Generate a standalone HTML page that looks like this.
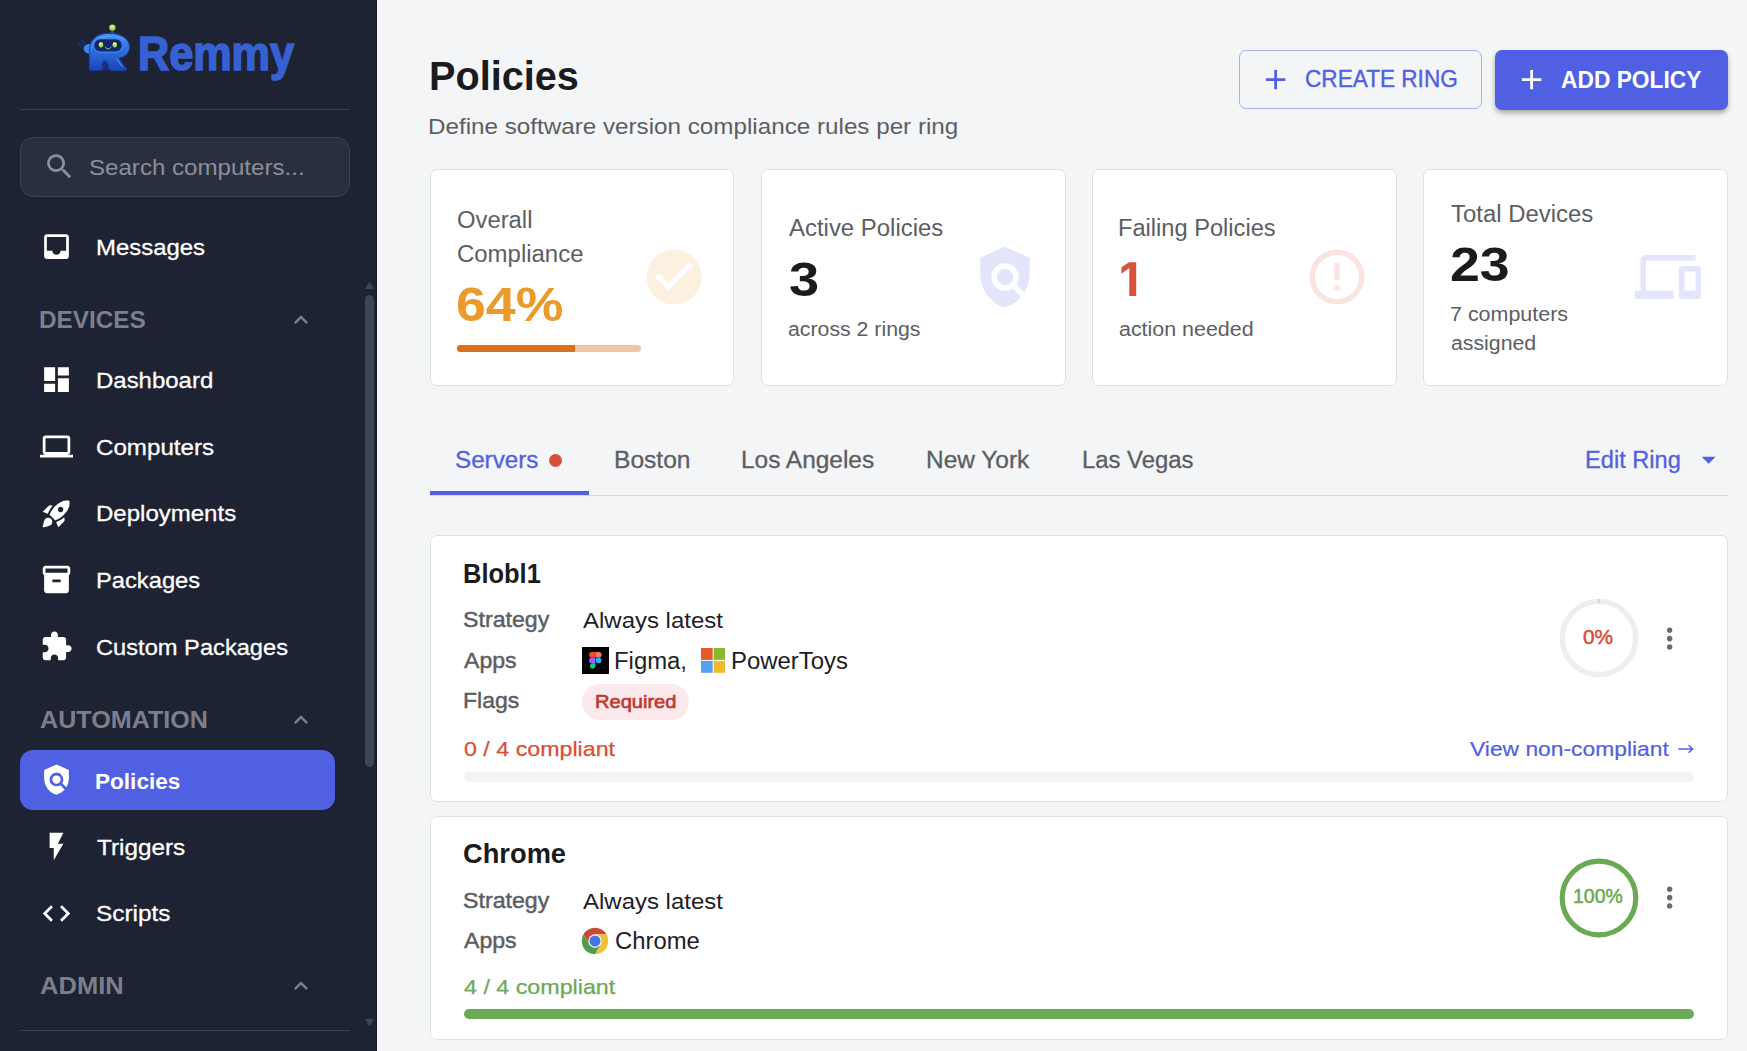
<!DOCTYPE html>
<html lang="en">
<head>
<meta charset="utf-8">
<title>Remmy - Policies</title>
<style>
*{box-sizing:border-box;margin:0;padding:0}
html,body{width:1747px;height:1051px;overflow:hidden;background:#f4f5f7;font-family:"Liberation Sans",sans-serif;}
body{position:relative}
.abs{position:absolute;white-space:nowrap;line-height:1}
svg{display:block}
/* ---------- sidebar ---------- */
#sidebar{position:absolute;left:0;top:0;width:377px;height:1051px;background:#1d2333;border-right:1px solid #121727}
.hr{position:absolute;left:20px;width:330px;height:1px;background:#3a3f4c}
#search{position:absolute;left:20px;top:137px;width:330px;height:60px;border-radius:13px;background:#2a2f3f;border:1px solid #3b4050}
.nav{position:absolute;left:20px;width:315px;height:60px;border-radius:13px}
.nav svg{position:absolute;left:20px;top:13.33px;width:33px;height:33px;fill:#fff}
.nav span{position:absolute;top:0;line-height:61px;font-size:22.7px;color:#fff;white-space:nowrap;-webkit-text-stroke:.3px #fff}
.nav.active{background:#5060e2}
.nav.active span{font-weight:700;top:.5px;-webkit-text-stroke:0}
.sec{position:absolute;font-size:24.5px;font-weight:700;color:#7c7f8b;line-height:1;white-space:nowrap}
.chev{position:absolute;left:287.2px;width:28px;height:28px;fill:#7c7f8b}
/* ---------- main ---------- */
.card{position:absolute;background:#fff;border:1px solid #dfe2e2;border-radius:7px}
.lbl{color:#5c5e63}
</style>
</head>
<body>
<!-- SIDEBAR -->
<div id="sidebar">
<svg id="robot" viewBox="70 18 70 60" style="position:absolute;left:70px;top:18px;width:70px;height:60px">
    <defs>
      <linearGradient id="gb" x1="0" y1="0" x2="0" y2="1"><stop offset="0" stop-color="#3f8cf2"/><stop offset=".45" stop-color="#2e6fe6"/><stop offset="1" stop-color="#1d43b4"/></linearGradient>
      <radialGradient id="ge" cx=".45" cy=".35" r=".7"><stop offset="0" stop-color="#e6f7a8"/><stop offset=".6" stop-color="#a4e03e"/><stop offset="1" stop-color="#7fc22a"/></radialGradient>
    </defs>
    <g fill="none" stroke="#1f3f96" stroke-width="1" stroke-linecap="round"><path d="M84.6 39.6c-3 .9-5.3 3.2-6.6 6.4"/><path d="M85.2 42.2c-2.2.7-3.8 2.3-4.7 4.6"/><path d="M85.8 44.8c-1.3.4-2.3 1.3-2.8 2.7"/></g>
    <path d="M110.2 33.4l1.4-3.6c.3-.7 1.3-.7 1.6 0l1.4 3.6z" fill="#1e46b8"/>
    <circle cx="112.4" cy="27.6" r="3.2" fill="url(#ge)"/>
    <path d="M90.5 44.2c-3.4-.9-6.8 1.5-6.8 4.9 0 2.6 2.6 4.6 6.8 5z" fill="#3f83ee"/>
    <rect x="100" y="60.5" width="11" height="9.6" fill="#1b2b84"/>
    <path stroke="#1f3ea6" stroke-width=".9" d="M89.3 68.4V52C88.6 40.2 97 33.3 109 33.3c12 0 20.5 5.7 20.5 13.7 0 6-4.6 9.9-10.8 11.3l7.5 10.1c.8 1.1 0 2.1-1.6 2.1h-12.8c-1.4 0-2.3-.8-2.7-2l-1.6-5.5c-.7-2.9-5.2-2.9-5.2 0v5.4c0 1.3-.9 2.1-2.3 2.1h-8.4c-1.4 0-2.300-.8-2.300-2.100z" fill="url(#gb)"/>
    <path d="M91 52c-.4-9.500 6.500-16.500 18-16.700 8-.1 15 2.600 18 7.600-3.600-3.700-10-5.800-18-5.700-10.500.200-17 5.800-18 14.800z" fill="#5fb0fa" opacity=".55"/>
    <rect x="93.700" y="38.800" width="28.600" height="13.200" rx="6.600" fill="#13256c" stroke="#4e9af3" stroke-width=".9"/>
    <ellipse cx="101" cy="44.700" rx="2.300" ry="2.800" fill="url(#ge)"/><ellipse cx="114.800" cy="44.700" rx="2.300" ry="2.800" fill="url(#ge)"/>
    <path d="M105.500 47.200c1.200 2.400 4.200 2.400 5.400 0" fill="none" stroke="#a4dc3c" stroke-width="1" stroke-linecap="round"/>
    <path d="M116.500 58.600l6.200 8.600" stroke="#69b4fb" stroke-width=".9" opacity=".8"/>
  </svg>
  <span id="t_logo" class="abs" style="left:137.9px;top:29px;font-size:48.6px;font-weight:700;color:#3761d3;-webkit-text-stroke:1.7px #3761d3;transform-origin:0 50%;transform:scaleX(0.8887)">Remmy</span>
  <div class="hr" style="top:109px"></div>
  <div id="search">
    <svg viewBox="0 0 24 24" style="position:absolute;left:22px;top:11.7px;width:33px;height:33px;fill:#8b8f9b"><path d="M15.5 14h-.79l-.28-.27C15.41 12.59 16 11.11 16 9.5 16 5.91 13.09 3 9.5 3S3 5.91 3 9.5 5.91 16 9.5 16c1.61 0 3.09-.59 4.23-1.57l.27.28v.79l5 4.99L20.49 19l-4.99-5zm-6 0C7.01 14 5 11.99 5 9.5S7.01 5 9.5 5 14 7.01 14 9.5 11.99 14 9.5 14z"/></svg>
    <span id="t_search" class="abs" style="left:68.0px;top:17.5px;font-size:22.7px;color:#8b8f9b;transform-origin:0 50%;transform:scaleX(1.0621)">Search computers...</span>
  </div>
  <div class="nav" style="top:217px"><svg viewBox="0 0 24 24"><path d="M19 3H4.99c-1.11 0-1.98.89-1.98 2L3 19c0 1.1.88 2 1.99 2H19c1.1 0 2-.9 2-2V5c0-1.11-.9-2-2-2zm0 12h-4c0 1.66-1.35 3-3 3s-3-1.34-3-3H4.99V5H19v10z"/></svg><span id="n_Messages" style="left:75.8px;transform-origin:0 50%;transform:scaleX(1.0547)">Messages</span></div>
  <div class="nav" style="top:350px"><svg viewBox="0 0 24 24"><path d="M3 13h8V3H3v10zm0 8h8v-6H3v6zm10 0h8V11h-8v10zm0-18v6h8V3h-8z"/></svg><span id="n_Dashboard" style="left:75.6px;transform-origin:0 50%;transform:scaleX(1.0563)">Dashboard</span></div>
  <div class="nav" style="top:416.67px"><svg viewBox="0 0 24 24"><path d="M20 18c1.1 0 1.99-.9 1.99-2L22 6c0-1.1-.9-2-2-2H4c-1.1 0-2 .9-2 2v10c0 1.1.9 2 2 2H0v2h24v-2h-4zM4 6h16v10H4V6z"/></svg><span id="n_Computers" style="left:75.7px;transform-origin:0 50%;transform:scaleX(1.0641)">Computers</span></div>
  <div class="nav" style="top:483.33px"><svg viewBox="0 0 24 24"><path d="M9.19 6.35c-2.04 2.29-3.44 5.58-3.57 5.89L2 10.69l4.05-4.05c.47-.47 1.15-.68 1.81-.55l1.33.26zM11.17 17s3.74-1.55 5.89-3.7c5.4-5.4 4.5-9.62 4.21-10.57-.95-.3-5.17-1.19-10.57 4.21C8.55 9.09 7 12.83 7 12.83L11.17 17zm6.48-2.19c-2.29 2.04-5.58 3.44-5.89 3.57L13.31 22l4.05-4.05c.47-.47.68-1.15.55-1.81l-.26-1.33zM9 18c0 .83-.34 1.58-.88 2.12C6.94 21.3 2 22 2 22s.7-4.94 1.88-6.12C4.42 15.34 5.17 15 6 15c1.66 0 3 1.34 3 3zm4-9c0-1.1.9-2 2-2s2 .9 2 2-.9 2-2 2-2-.9-2-2z"/></svg><span id="n_Deployments" style="left:75.6px;transform-origin:0 50%;transform:scaleX(1.0585)">Deployments</span></div>
  <div class="nav" style="top:550px"><svg viewBox="0 0 24 24"><path d="M20 2H4c-1 0-2 .9-2 2v3.01c0 .72.43 1.34 1 1.69V20c0 1.1 1.1 2 2 2h14c.9 0 2-.9 2-2V8.7c.57-.35 1-.97 1-1.69V4c0-1.1-1-2-2-2zm-5 12H9v-2h6v2zm5-7H4V4h16v3z"/></svg><span id="n_Packages" style="left:75.6px;transform-origin:0 50%;transform:scaleX(1.0452)">Packages</span></div>
  <div class="nav" style="top:616.67px"><svg viewBox="0 0 24 24"><path d="M20.5 11H19V7c0-1.1-.9-2-2-2h-4V3.5C13 2.12 11.88 1 10.5 1S8 2.12 8 3.5V5H4c-1.1 0-1.99.9-1.99 2v3.8H3.5c1.49 0 2.7 1.21 2.7 2.7s-1.21 2.7-2.7 2.7H2V20c0 1.1.9 2 2 2h3.8v-1.5c0-1.49 1.21-2.7 2.7-2.7 1.49 0 2.7 1.21 2.7 2.7V22H17c1.1 0 2-.9 2-2v-4h1.5c1.38 0 2.5-1.12 2.5-2.5S21.88 11 20.5 11z"/></svg><span id="n_CustomPackages" style="left:75.8px;transform-origin:0 50%;transform:scaleX(1.0430)">Custom Packages</span></div>
  <div class="nav active" style="top:750px"><svg viewBox="0 0 24 24"><path d="M21 5l-9-4-9 4v6c0 5.55 3.84 10.74 9 12 2.3-.56 4.33-1.9 5.88-3.71l-3.12-3.12c-1.94 1.29-4.58 1.07-6.29-.64-1.95-1.95-1.95-5.12 0-7.07 1.95-1.95 5.12-1.95 7.07 0 1.71 1.71 1.92 4.35.64 6.29l2.9 2.9C20.29 15.69 21 13.38 21 11V5z"/><circle cx="12" cy="12" r="3"/></svg><span id="n_Policies" style="left:75.4px;transform-origin:0 50%;transform:scaleX(0.9947)">Policies</span></div>
  <div class="nav" style="top:816.67px"><svg viewBox="0 0 24 24"><path d="M7 2v11h3v9l7-12h-4l4-8z"/></svg><span id="n_Triggers" style="left:76.6px;transform-origin:0 50%;transform:scaleX(1.0706)">Triggers</span></div>
  <div class="nav" style="top:883.33px"><svg viewBox="0 0 24 24"><path d="M9.4 16.6L4.8 12l4.6-4.6L8 6l-6 6 6 6 1.4-1.4zm5.2 0l4.6-4.6-4.6-4.6L16 6l6 6-6 6-1.4-1.4z"/></svg><span id="n_Scripts" style="left:76.0px;transform-origin:0 50%;transform:scaleX(1.0735)">Scripts</span></div>
  <div class="sec" id="s_DEVICES" style="left:38.8px;top:308px;transform-origin:0 50%;transform:scaleX(0.9928)">DEVICES</div><svg class="chev" viewBox="0 0 24 24" style="top:305.9px"><path d="M12 8l-6 6 1.41 1.41L12 10.83l4.59 4.58L18 14z"/></svg>
  <div class="sec" id="s_AUTOMATION" style="left:39.8px;top:708px;transform-origin:0 50%;transform:scaleX(1.0253)">AUTOMATION</div><svg class="chev" viewBox="0 0 24 24" style="top:705.9px"><path d="M12 8l-6 6 1.41 1.41L12 10.83l4.59 4.58L18 14z"/></svg>
  <div class="sec" id="s_ADMIN" style="left:39.8px;top:974px;transform-origin:0 50%;transform:scaleX(1.0424)">ADMIN</div><svg class="chev" viewBox="0 0 24 24" style="top:971.9px"><path d="M12 8l-6 6 1.41 1.41L12 10.83l4.59 4.58L18 14z"/></svg>
  <div class="hr" style="top:1030px"></div>
  <div id="sb_thumb" style="position:absolute;left:365px;top:295px;width:9px;height:472px;border-radius:5px;background:#3e4451"></div>
  <svg style="position:absolute;left:365px;top:282px;width:9px;height:7px;fill:#3e4451" viewBox="0 0 9 7"><path d="M0 7L3.7 .5h1.600L9 7z"/></svg>
  <svg style="position:absolute;left:365px;top:1019px;width:9px;height:7px;fill:#3e4451" viewBox="0 0 9 7"><path d="M0 0L3.7 6.500h1.600L9 0z"/></svg>
</div>
<!-- MAIN -->
<div id="main">
<span id="h_title" class="abs" style="left:428.5px;top:56px;font-size:41px;color:#1b1b1d;font-weight:700;transform-origin:0 50%;transform:scaleX(0.9670)">Policies</span>
<span id="h_sub" class="abs" style="left:427.9px;top:116px;font-size:22px;color:#5c5e63;font-weight:400;transform-origin:0 50%;transform:scaleX(1.1007)">Define software version compliance rules per ring</span>
<div id="b_create" style="position:absolute;left:1239px;top:50px;width:243px;height:58.5px;border:1px solid #a9b0f0;border-radius:7px"></div>
<svg viewBox="0 0 24 24" style="position:absolute;left:1259px;top:62.5px;width:33.3px;height:33.3px;fill:#5060e2"><path d="M19 13h-6v6h-2v-6H5v-2h6V5h2v6h6v2z"/></svg>
<span id="t_create" class="abs" style="left:1305.1px;top:67px;font-size:24.5px;color:#5060e2;font-weight:400;-webkit-text-stroke:.4px #5060e2;transform-origin:0 50%;transform:scaleX(0.9227)">CREATE RING</span>
<div id="b_add" style="position:absolute;left:1495px;top:50px;width:233px;height:59.5px;background:#5060e2;border-radius:7px;box-shadow:0 4px 6px -1px rgba(0,0,0,.24),0 2px 4px rgba(0,0,0,.15)"></div>
<svg viewBox="0 0 24 24" style="position:absolute;left:1514.6px;top:63px;width:33.3px;height:33.3px;fill:#fff"><path d="M19 13h-6v6h-2v-6H5v-2h6V5h2v6h6v2z"/></svg>
<span id="t_add" class="abs" style="left:1561.0px;top:68px;font-size:24.5px;color:#fff;font-weight:700;transform-origin:0 50%;transform:scaleX(0.9294)">ADD POLICY</span>
<div class="card" id="sc0" style="left:430px;top:169px;width:304px;height:217px"></div>
<div class="card" id="sc1" style="left:761px;top:169px;width:305px;height:217px"></div>
<div class="card" id="sc2" style="left:1092px;top:169px;width:305px;height:217px"></div>
<div class="card" id="sc3" style="left:1423px;top:169px;width:305px;height:217px"></div>
<span id="c1a" class="abs" style="left:456.8px;top:209px;font-size:23px;color:#5c5e63;font-weight:400;transform-origin:0 50%;transform:scaleX(1.0354)">Overall</span>
<span id="c1b" class="abs" style="left:456.7px;top:243px;font-size:23px;color:#5c5e63;font-weight:400;transform-origin:0 50%;transform:scaleX(1.0414)">Compliance</span>
<span id="c1v" class="abs" style="left:456.1px;top:281px;font-size:48px;color:#ed9a2d;font-weight:700;transform-origin:0 50%;transform:scaleX(1.1178)">64%</span>
<div style="position:absolute;left:457px;top:345px;width:184px;height:7px;border-radius:4px;background:#edc9a3;overflow:hidden"><div style="width:118px;height:7px;background:#d77222"></div></div>
<svg viewBox="0 0 24 24" style="position:absolute;left:641px;top:243.6px;width:66px;height:66px;fill:#fcf0e0"><path d="M12 2C6.48 2 2 6.48 2 12s4.48 10 10 10 10-4.48 10-10S17.52 2 12 2zm-2 15l-5-5 1.41-1.41L10 14.17l7.59-7.59L19 8l-9 9z"/></svg>
<span id="c2a" class="abs" style="left:789.0px;top:217px;font-size:23px;color:#5c5e63;font-weight:400;transform-origin:0 50%;transform:scaleX(1.0407)">Active Policies</span>
<span id="c2v" class="abs" style="left:788.6px;top:256px;font-size:48px;color:#1b1b1d;font-weight:700;transform-origin:0 50%;transform:scaleX(1.1303)">3</span>
<span id="c2s" class="abs" style="left:788.0px;top:319px;font-size:20px;color:#5c5e63;font-weight:400;transform-origin:0 50%;transform:scaleX(1.0643)">across 2 rings</span>
<svg viewBox="0 0 24 24" style="position:absolute;left:972px;top:244px;width:66px;height:66px;fill:#e3e6fb"><path d="M21 5l-9-4-9 4v6c0 5.55 3.84 10.74 9 12 2.3-.56 4.33-1.9 5.88-3.71l-3.12-3.12c-1.94 1.29-4.58 1.07-6.29-.64-1.95-1.95-1.95-5.12 0-7.07 1.95-1.95 5.12-1.95 7.07 0 1.71 1.71 1.92 4.35.64 6.29l2.9 2.9C20.29 15.69 21 13.38 21 11V5z"/><circle cx="12" cy="12" r="3"/></svg>
<span id="c3a" class="abs" style="left:1117.9px;top:217px;font-size:23px;color:#5c5e63;font-weight:400;transform-origin:0 50%;transform:scaleX(1.0278)">Failing Policies</span>
<svg viewBox="1120 260 20 38" style="position:absolute;left:1120px;top:260px;width:20px;height:38px"><path d="M1129.1 262.3H1136.200V295.900H1129.300V268L1121.400 273.800V267.300z" fill="#d9523a"/></svg>
<span id="c3s" class="abs" style="left:1118.9px;top:319px;font-size:20px;color:#5c5e63;font-weight:400;transform-origin:0 50%;transform:scaleX(1.0710)">action needed</span>
<svg viewBox="0 0 24 24" style="position:absolute;left:1304px;top:244px;width:66px;height:66px;fill:#fae4e0"><path d="M11 15h2v2h-2zm0-8h2v6h-2zm.99-5C6.47 2 2 6.48 2 12s4.47 10 9.99 10C17.52 22 22 17.52 22 12S17.52 2 11.99 2zM12 20c-4.42 0-8-3.58-8-8s3.58-8 8-8 8 3.58 8 8-3.58 8-8 8z"/></svg>
<span id="c4a" class="abs" style="left:1451.2px;top:203px;font-size:23px;color:#5c5e63;font-weight:400;transform-origin:0 50%;transform:scaleX(1.0399)">Total Devices</span>
<span id="c4v" class="abs" style="left:1449.5px;top:241px;font-size:48px;color:#1b1b1d;font-weight:700;transform-origin:0 50%;transform:scaleX(1.1185)">23</span>
<span id="c4s1" class="abs" style="left:1449.9px;top:304px;font-size:20px;color:#5c5e63;font-weight:400;transform-origin:0 50%;transform:scaleX(1.0729)">7 computers</span>
<span id="c4s2" class="abs" style="left:1450.8px;top:333px;font-size:20px;color:#5c5e63;font-weight:400;transform-origin:0 50%;transform:scaleX(1.0643)">assigned</span>
<svg viewBox="0 0 24 24" style="position:absolute;left:1635px;top:244px;width:66px;height:66px;fill:#e3e6fb"><path d="M4 6h18V4H4c-1.1 0-2 .9-2 2v11H0v3h14v-3H4V6zm19 2h-6c-.55 0-1 .45-1 1v10c0 .55.45 1 1 1h6c.55 0 1-.45 1-1V9c0-.55-.45-1-1-1zm-1 9h-4v-7h4v7z"/></svg>
<div style="position:absolute;left:430px;top:494.5px;width:1297.5px;height:1px;background:#d6d7d9"></div>
<div style="position:absolute;left:430px;top:491px;width:159px;height:3.5px;background:#5060e2"></div>
<span id="tb1" class="abs" style="left:455.0px;top:449px;font-size:23.3px;-webkit-text-stroke:.3px #5060e2;color:#5060e2;font-weight:400;transform-origin:0 50%;transform:scaleX(1.0395)">Servers</span>
<div style="position:absolute;left:548.6px;top:453.6px;width:13.6px;height:13.6px;border-radius:50%;background:#d9503a"></div>
<span id="tb2" class="abs" style="left:613.9px;top:449px;font-size:23.3px;-webkit-text-stroke:.3px #5c5e63;color:#5c5e63;font-weight:400;transform-origin:0 50%;transform:scaleX(1.0545)">Boston</span>
<span id="tb3" class="abs" style="left:741.2px;top:449px;font-size:23.3px;-webkit-text-stroke:.3px #5c5e63;color:#5c5e63;font-weight:400;transform-origin:0 50%;transform:scaleX(1.0491)">Los Angeles</span>
<span id="tb4" class="abs" style="left:926.0px;top:449px;font-size:23.3px;-webkit-text-stroke:.3px #5c5e63;color:#5c5e63;font-weight:400;transform-origin:0 50%;transform:scaleX(1.0496)">New York</span>
<span id="tb5" class="abs" style="left:1082.4px;top:449px;font-size:23.3px;-webkit-text-stroke:.3px #5c5e63;color:#5c5e63;font-weight:400;transform-origin:0 50%;transform:scaleX(1.0246)">Las Vegas</span>
<span id="tb_edit" class="abs" style="left:1584.5px;top:449px;font-size:23.3px;-webkit-text-stroke:.3px #5060e2;color:#5060e2;font-weight:400;transform-origin:0 50%;transform:scaleX(1.0139)">Edit Ring</span>
<svg viewBox="0 0 24 24" style="position:absolute;left:1692.3px;top:443.3px;width:33.3px;height:33.3px;fill:#5060e2"><path d="M7 10l5 5 5-5z"/></svg>
<div class="card" id="pc1" style="left:430px;top:535px;width:1298px;height:267px"></div>
<span id="p1t" class="abs" style="left:463.0px;top:560px;font-size:28px;color:#1b1b1d;font-weight:700;transform-origin:0 50%;transform:scaleX(0.9096)">Blobl1</span>
<span id="p1l1" class="abs" style="left:463.3px;top:609px;font-size:22px;color:#5c5e63;font-weight:400;-webkit-text-stroke:.45px #5c5e63;transform-origin:0 50%;transform:scaleX(1.0539)">Strategy</span>
<span id="p1v1" class="abs" style="left:583.0px;top:609px;font-size:22.7px;color:#1f2023;font-weight:400;transform-origin:0 50%;transform:scaleX(1.0567)">Always latest</span>
<span id="p1l2" class="abs" style="left:463.7px;top:650px;font-size:22px;color:#5c5e63;font-weight:400;-webkit-text-stroke:.45px #5c5e63;transform-origin:0 50%;transform:scaleX(1.0501)">Apps</span>
<svg viewBox="0 0 27 27" style="position:absolute;left:582px;top:647px;width:27px;height:27px"><rect width="27" height="27" fill="#000"/><path d="M9.9 5h3.6v5.6H9.9a2.8 2.8 0 010-5.6z" fill="#f24e1e"/><path d="M13.5 5h3.3a2.8 2.8 0 010 5.6h-3.3z" fill="#ff7262"/><path d="M9.9 10.6h3.6v5.6H9.9a2.8 2.8 0 010-5.6z" fill="#a259ff"/><circle cx="16.6" cy="13.4" r="2.8" fill="#1abcfe"/><path d="M9.9 16.2h3.6V19a2.8 2.8 0 11-3.6-2.8z" fill="#0acf83"/></svg>
<span id="p1fig" class="abs" style="left:614.2px;top:650px;font-size:23px;color:#1f2023;font-weight:400;transform-origin:0 50%;transform:scaleX(1.0386)">Figma,</span>
<svg viewBox="0 0 25 25" style="position:absolute;left:700.9px;top:648.1px;width:24.3px;height:24.8px" preserveAspectRatio="none"><rect x="0" y="0" width="12" height="12" fill="#e05a2b"/><rect x="13" y="0" width="12" height="12" fill="#8ab92d"/><rect x="0" y="13" width="12" height="12" fill="#57a1ee"/><rect x="13" y="13" width="12" height="12" fill="#f3ba2c"/></svg>
<span id="p1pt" class="abs" style="left:731.2px;top:650px;font-size:23px;color:#1f2023;font-weight:400;transform-origin:0 50%;transform:scaleX(1.0404)">PowerToys</span>
<span id="p1l3" class="abs" style="left:463.1px;top:690px;font-size:22px;color:#5c5e63;font-weight:400;-webkit-text-stroke:.45px #5c5e63;transform-origin:0 50%;transform:scaleX(1.0448)">Flags</span>
<div style="position:absolute;left:582px;top:684px;width:107px;height:35.5px;border-radius:18px;background:#fbe9eb"></div>
<span id="p1req" class="abs" style="left:595.0px;top:692px;font-size:19px;color:#c0392f;font-weight:400;-webkit-text-stroke:.65px #c0392f;transform-origin:0 50%;transform:scaleX(1.0560)">Required</span>
<span id="p1c" class="abs" style="left:463.6px;top:738px;font-size:21px;color:#d94f35;font-weight:400;transform-origin:0 50%;transform:scaleX(1.1059);-webkit-text-stroke:.25px #d94f35">0 / 4 compliant</span>
<span id="p1view" class="abs" style="left:1470.2px;top:738px;font-size:21px;color:#5060e2;font-weight:400;transform-origin:0 50%;transform:scaleX(1.0868);-webkit-text-stroke:.2px #5060e2">View non-compliant</span><svg viewBox="0 0 16 10" style="position:absolute;left:1677.7px;top:743.9px;width:16px;height:10px"><path d="M.3 5h14.4M10.6 1.2L14.7 5l-4.1 3.800" fill="none" stroke="#5060e2" stroke-width="1.500"/></svg>
<div style="position:absolute;left:464px;top:772px;width:1230px;height:10px;border-radius:5px;background:#f3f3f4"></div>
<svg viewBox="0 0 80 80" style="position:absolute;left:1558.7px;top:598.2px;width:80px;height:80px"><circle cx="40" cy="40" r="36.7" fill="none" stroke="#eeeeee" stroke-width="5.3"/><path d="M40 .8v4.6" stroke="#eaa59a" stroke-width=".8"/></svg>
<span id="p1pct" class="abs" style="left:1583.0px;top:627px;font-size:20.5px;color:#d94f35;font-weight:400;-webkit-text-stroke:.5px #d94f35;transform-origin:0 50%;transform:scaleX(1.0166)">0%</span>
<svg viewBox="0 0 24 24" style="position:absolute;left:1652.8px;top:621.8px;width:33.3px;height:33.3px;fill:#6b6b6b"><path d="M12 8c1.1 0 2-.9 2-2s-.9-2-2-2-2 .9-2 2 .9 2 2 2zm0 2c-1.1 0-2 .9-2 2s.9 2 2 2 2-.9 2-2-.9-2-2-2zm0 6c-1.1 0-2 .9-2 2s.9 2 2 2 2-.9 2-2-.9-2-2-2z"/></svg>
<div class="card" id="pc2" style="left:430px;top:816px;width:1298px;height:224px"></div>
<span id="p2t" class="abs" style="left:463.1px;top:840px;font-size:28px;color:#1b1b1d;font-weight:700;transform-origin:0 50%;transform:scaleX(0.9740)">Chrome</span>
<span id="p2l1" class="abs" style="left:463.3px;top:890px;font-size:22px;color:#5c5e63;font-weight:400;-webkit-text-stroke:.45px #5c5e63;transform-origin:0 50%;transform:scaleX(1.0539)">Strategy</span>
<span id="p2v1" class="abs" style="left:583.0px;top:890px;font-size:22.7px;color:#1f2023;font-weight:400;transform-origin:0 50%;transform:scaleX(1.0567)">Always latest</span>
<span id="p2l2" class="abs" style="left:463.7px;top:930px;font-size:22px;color:#5c5e63;font-weight:400;-webkit-text-stroke:.45px #5c5e63;transform-origin:0 50%;transform:scaleX(1.0501)">Apps</span>
<svg viewBox="-14 -14 28 28" style="position:absolute;left:581px;top:926.8px;width:28px;height:28px"><path d="M-5.77 3.33L-11.52-6.64A13.3 13.3 0 0 1 11.51-6.66L0-6.66z" fill="#cc4a34"/><path d="M0-6.66L11.51-6.66A13.3 13.3 0 0 1 .015 13.3L5.77 3.33z" fill="#eec136"/><path d="M5.77 3.33L.015 13.3A13.3 13.3 0 0 1-11.52-6.64L-5.77 3.33z" fill="#529c4e"/><circle r="6.7" fill="#f3f6fd"/><circle r="5.5" fill="#4673e2"/></svg>
<span id="p2chr" class="abs" style="left:615.1px;top:930px;font-size:23px;color:#1f2023;font-weight:400;transform-origin:0 50%;transform:scaleX(1.0365)">Chrome</span>
<span id="p2c" class="abs" style="left:463.9px;top:976px;font-size:21px;color:#6aaa55;font-weight:400;transform-origin:0 50%;transform:scaleX(1.1073);-webkit-text-stroke:.25px #6aaa55">4 / 4 compliant</span>
<div style="position:absolute;left:464px;top:1009px;width:1230px;height:10px;border-radius:5px;background:#6aaa55"></div>
<svg viewBox="0 0 80 80" style="position:absolute;left:1558.7px;top:857.7px;width:80px;height:80px"><circle cx="40" cy="40" r="36.800" fill="none" stroke="#6aaa55" stroke-width="5.200"/></svg>
<span id="p2pct" class="abs" style="left:1572.5px;top:886px;font-size:20.5px;color:#6aaa55;font-weight:400;-webkit-text-stroke:.5px #6aaa55;transform-origin:0 50%;transform:scaleX(0.9491)">100%</span>
<svg viewBox="0 0 24 24" style="position:absolute;left:1652.6px;top:880.7px;width:33.3px;height:33.3px;fill:#6b6b6b"><path d="M12 8c1.1 0 2-.9 2-2s-.9-2-2-2-2 .9-2 2 .9 2 2 2zm0 2c-1.1 0-2 .9-2 2s.9 2 2 2 2-.9 2-2-.9-2-2-2zm0 6c-1.1 0-2 .9-2 2s.9 2 2 2 2-.9 2-2-.9-2-2-2z"/></svg>
</div>
</body>
</html>
